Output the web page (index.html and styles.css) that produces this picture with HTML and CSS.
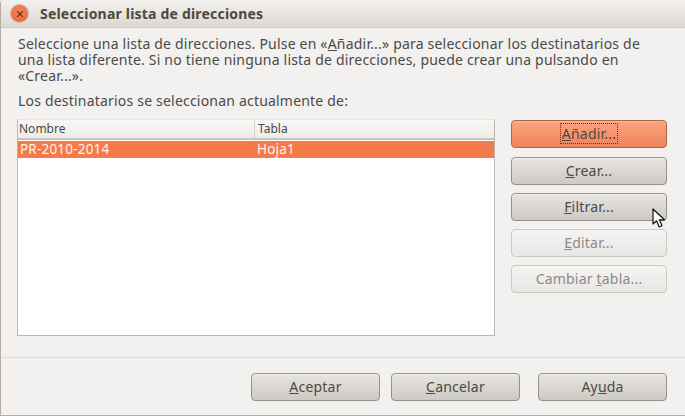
FILE: index.html
```html
<!DOCTYPE html>
<html lang="es">

<head>
  <meta charset="UTF-8">
  <meta name="viewport" content="width=device-width, initial-scale=1.0">
  <title>Seleccionar lista de direcciones</title>
  <link rel="stylesheet" href="styles.css">
</head>

<body>

  <div class="window">
    <div class="titlebar">
      <div class="close">
        <svg width="8" height="8" viewBox="0 0 8 8">
          <path d="M1.2 1.2 L6.8 6.8 M6.8 1.2 L1.2 6.8" stroke="#5a2a18" stroke-width="1.2" fill="none" />
        </svg>
      </div>
      <div class="title">Seleccionar lista de direcciones</div>
    </div>

    <div class="content">
      <p class="intro">Seleccione una lista de direcciones. Pulse en «<u>A</u>ñadir...» para seleccionar los destinatarios de<br>una lista diferente. Si no tiene ninguna lista de direcciones, puede crear una pulsando en<br>«Crear...».</p>
      <p class="current">Los destinatarios se seleccionan actualmente de:</p>

      <div class="main">
        <div class="table">
          <div class="table-head">
            <div class="col-name">Nombre</div>
            <div class="col-table">Tabla</div>
          </div>
          <div class="table-row">
            <div class="col-name">PR-2010-2014</div>
            <div class="col-table">Hoja1</div>
          </div>
        </div>

        <div class="side">
          <button class="btn btn-active"><span class="focus"><u>A</u>ñadir...</span></button>
          <button class="btn"><span><u>C</u>rear...</span></button>
          <button class="btn"><span><u>F</u>iltrar...</span></button>
          <button class="btn btn-off"><span><u>E</u>ditar...</span></button>
          <button class="btn btn-off"><span>Cambiar <u>t</u>abla...</span></button>
        </div>
      </div>
    </div>

    <div class="footer">
      <button class="btn btn-wide"><span><u>A</u>ceptar</span></button>
      <button class="btn btn-wide"><span><u>C</u>ancelar</span></button>
      <button class="btn btn-wide btn-help"><span>Ay<u>u</u>da</span></button>
    </div>

    <!-- puntero del ratón -->
    <svg class="cursor" width="15" height="22" viewBox="0 0 15 22">
      <path d="M1 1 L1 16 L4.6 12.8 L7.2 19 L10 17.8 L7.4 11.8 L12.4 11.8 Z" fill="#fff" stroke="#111" stroke-width="1.2" stroke-linejoin="round" />
    </svg>
  </div>

</body>

</html>
```

FILE: styles.css
```css
* {
  box-sizing: border-box;
}

html,
body {
  margin: 0;
  padding: 0;
}

body {
  width: 685px;
  height: 416px;
  overflow: hidden;
  background-color: #f2f1ef;
  font-family: "Noto Sans", "DejaVu Sans", sans-serif;
  font-size: 14px;
  letter-spacing: 0.2px;
  color: #4a4a48;
}

.window {
  position: relative;
  display: flex;
  flex-direction: column;
  width: 685px;
  height: 416px;
  border-left: 1px solid #b5ada2;
  border-bottom: 1px solid #b5ada2;
  border-top-left-radius: 4px;
  border-top-right-radius: 4px;
  background-color: #f2f1ef;
}

.titlebar {
  display: flex;
  align-items: center;
  flex: none;
  height: 28px;
  padding-left: 10px;
  background: linear-gradient(#f4f2ef, #dcd8d0);
  border-bottom: 1px solid #cfcabf;
  border-top-left-radius: 4px;
  border-top-right-radius: 4px;
}

.close {
  display: flex;
  align-items: center;
  justify-content: center;
  width: 17px;
  height: 17px;
  border-radius: 50%;
  background: radial-gradient(circle at 50% 40%, #f58a5f, #e85f2e);
  box-shadow: 0 0 0 1px #cdb7a6;
}

.title {
  margin-left: 12px;
  font-size: 14px;
  letter-spacing: 0.2px;
  font-weight: bold;
  color: #4c4842;
}

.content {
  flex: 1;
  padding: 8px 18px 0 16px;
}

.intro {
  margin: 0 0 0 1px;
  line-height: 16px;
}

.current {
  margin: 9px 0 0 1px;
  line-height: 16px;
}

.main {
  display: flex;
  margin-top: 10px;
}

.table {
  width: 479px;
  height: 217px;
  background-color: #fff;
  border: 1px solid #bdb6ab;
  border-top-color: #e8e6e2;
}

.table-head {
  display: flex;
  height: 20px;
  font-size: 12px;
  letter-spacing: 0;
  line-height: 18px;
  background: linear-gradient(#f8f7f5, #eeebe7);
  border-bottom: 2px solid #c9c4ba;
}

.table-row {
  display: flex;
  height: 17px;
  margin-top: 1px;
  line-height: 17px;
  font-size: 13.5px;
  color: #fdf3ec;
  background-color: #f47a4a;
}

.col-name {
  width: 237px;
  padding-left: 2px;
}

.table-head .col-name {
  padding-left: 1px;
  border-right: 1px solid #d8d4cc;
}

.col-table {
  padding-left: 2px;
}

.table-head .col-table {
  padding-left: 3px;
}

.side {
  display: flex;
  flex-direction: column;
  gap: 8px;
  margin-left: 16px;
  padding-top: 1px;
}

.btn {
  display: flex;
  align-items: center;
  justify-content: center;
  flex: none;
  width: 156px;
  height: 28px;
  padding: 0 0 2px;
  font-family: inherit;
  font-size: 14px;
  letter-spacing: 0.2px;
  color: #4a4a48;
  background: linear-gradient(#e8e5e1, #cdc9c4);
  border: 1px solid #96918a;
  border-radius: 4px;
  box-shadow: inset 0 1px 0 #f3f1ee;
}

.btn-active {
  margin-bottom: 1px;
  background: linear-gradient(#fba57f, #f0825a);
  border-color: #a8674c;
  box-shadow: inset 0 1px 0 #fdb898;
}

.btn-off {
  color: #8a8a88;
  background: linear-gradient(#f5f4f2, #e9e7e4);
  border-color: #cdc9c3;
  box-shadow: none;
}

.focus {
  outline: 1px dotted #14506e;
  padding: 0 1px;
}

.footer {
  display: flex;
  flex: none;
  height: 58px;
  padding: 15px 17px 0 250px;
  border-top: 1px solid #dedbd6;
}

.btn-wide {
  width: 129px;
  margin-right: 11px;
}

.btn-help {
  margin-left: 7px;
  margin-right: 0;
}

.cursor {
  position: absolute;
  left: 651px;
  top: 208px;
}
```
